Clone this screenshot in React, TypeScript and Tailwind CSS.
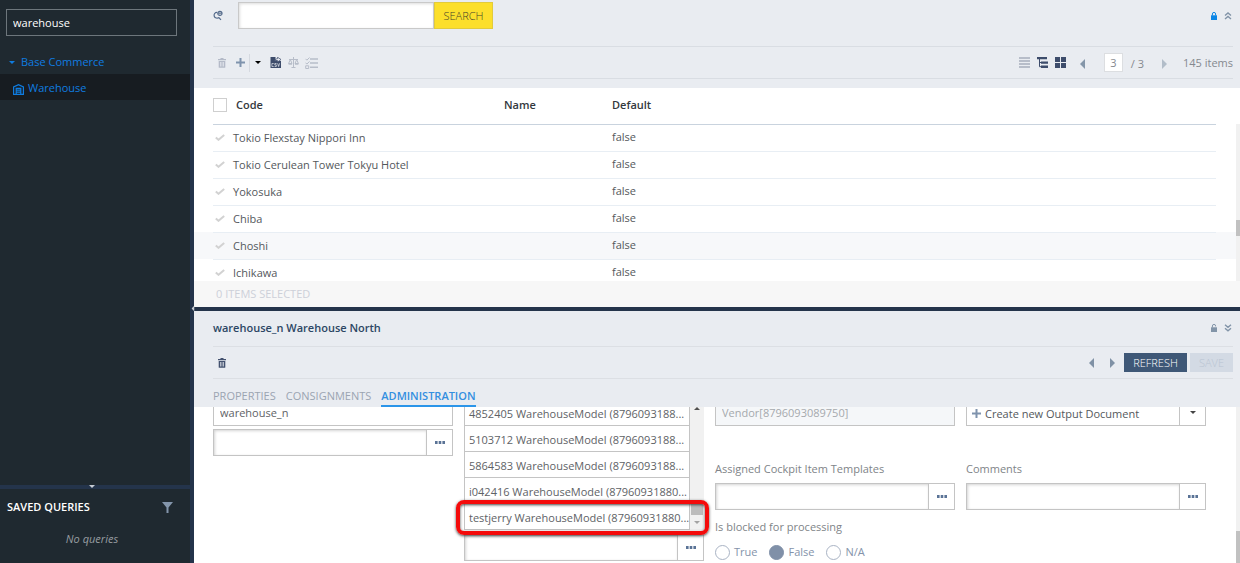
import type { ReactNode } from 'react'
import clsx from 'clsx'

const warehouses = [
  'Tokio Flexstay Nippori Inn',
  'Tokio Cerulean Tower Tokyu Hotel',
  'Yokosuka',
  'Chiba',
  'Choshi',
  'Ichikawa',
]

const models = [
  '4852405 WarehouseModel (8796093188...',
  '5103712 WarehouseModel (8796093188...',
  '5864583 WarehouseModel (8796093188...',
  'i042416 WarehouseModel (87960931880...',
  'testjerry WarehouseModel (87960931880...',
]

function TrashIcon({ className }: { className?: string }) {
  return (
    <svg className={clsx('h-2.5 w-2', className)} viewBox="0 0 8 10" fill="currentColor">
      <path d="M2.5 0h3v1H8v1.3H0V1h2.5z" />
      <path fillRule="evenodd" d="M.7 3h6.6v6.2q0 .6-.6.6H1.300q-.6 0-.6-.6zM2 4v4.500h.7V4zm1.650 0v4.500h.7V4zM5.300 4v4.500H6V4z" />
    </svg>
  )
}

function PlusIcon() {
  return (
    <svg className="h-[9px] w-[9px] text-[#7f93ad]" viewBox="0 0 9 9" fill="currentColor">
      <path d="M3.500 0h2v3.500H9v2H5.500V9h-2V5.500H0v-2h3.500z" />
    </svg>
  )
}

function CaretIcon({ className }: { className?: string }) {
  return (
    <svg className={clsx('h-[3px] w-[6px]', className)} viewBox="0 0 6 3" fill="currentColor">
      <path d="M0 0h6L3 3z" />
    </svg>
  )
}

function ArrowIcon({ flip, className }: { flip?: boolean; className?: string }) {
  return (
    <svg className={clsx('h-[10px] w-[6px]', className)} viewBox="0 0 6 10" fill="currentColor">
      {flip ? <path d="M1 0l5 5-5 5z" /> : <path d="M5 0v10L0 5z" />}
    </svg>
  )
}

function LockIcon({ open, className }: { open?: boolean; className?: string }) {
  return (
    <svg className={clsx('h-2 w-1.5', className)} viewBox="0 0 6 8" fill="currentColor">
      <path d="M0 3.300h6V8H0z" />
      <path
        d={open ? 'M1.400 3.500V2a1.600 1.600 0 0 1 3.200 0v.4' : 'M1.400 3.500V2a1.600 1.600 0 0 1 3.200 0v1.500'}
        fill="none"
        stroke="currentColor"
      />
    </svg>
  )
}

function ChevronsIcon({ down }: { down?: boolean }) {
  return (
    <svg className="h-2 w-2 text-[#8294a8]" viewBox="0 0 8 8" fill="none" stroke="currentColor" strokeWidth="1.400">
      <path d={down ? 'M1 .8l3 2.500L7 .8M1 4.300l3 2.500 3-2.500' : 'M1 3.500L4 1l3 2.500M1 7l3-2.500L7 7'} />
    </svg>
  )
}

function CheckIcon() {
  return (
    <svg className="h-[7px] w-[10px] text-[#d2d2d2]" viewBox="0 0 10 7" fill="none" stroke="currentColor" strokeWidth="2">
      <path d="M.8 3.500l2.700 2.300L9.200 1" />
    </svg>
  )
}

function IconButton({ label, className, children }: { label: string; className?: string; children: ReactNode }) {
  return (
    <button type="button" aria-label={label} className={clsx('flex items-center justify-center', className)}>
      {children}
    </button>
  )
}

function ReferenceField({ id, label }: { id: string; label: string }) {
  return (
    <div className="flex h-[27px] border border-[#c4c4c4] bg-white">
      <input id={id} aria-label={label} className="min-w-0 flex-1 px-1.5 shadow-[inset_1px_1px_3px_#d4d4d4] outline-none" />
      <IconButton label={`Browse ${label}`} className="w-[26px] border-l border-[#c4c4c4]">
        <svg className="h-[3px] w-[10px] text-[#5a7396]" viewBox="0 0 10 3" fill="currentColor">
          <path d="M0 0h2.600v3H0zM3.700 0h2.600v3H3.700zM7.400 0H10v3H7.400z" />
        </svg>
      </IconButton>
    </div>
  )
}

function Sidebar() {
  return (
    <aside className="flex w-[194px] shrink-0 flex-col border-r-4 border-[#24344b] bg-[#1f2930]">
      <div className="px-1.5 pt-[9px] pr-[13px]">
        <input
          aria-label="Filter tree"
          defaultValue="warehouse"
          className="h-[27px] w-full border border-[#6d767c] px-1.5 text-white outline-none"
        />
      </div>
      <nav className="mt-[14px] flex-1 text-[#0f7ce0]">
        <a href="#base-commerce" className="flex h-6 items-center gap-1.5 pl-[9px]">
          <CaretIcon />
          Base Commerce
        </a>
        <a href="#warehouse" className="flex h-[26px] items-center gap-1 bg-[#171c21] pt-px pl-[13px]">
          <svg className="mt-1 h-[11px] w-[11px]" viewBox="0 0 11 11" fill="none" stroke="currentColor" strokeWidth="1.200">
            <path d="M.6 10.400V3L5.500.7 10.400 3v7.400z" />
            <path d="M3.200 10V4.300h4.600V10M3.500 6.200h4M3.500 8.200h4" />
          </svg>
          Warehouse
        </a>
      </nav>
      <div className="flex h-1 justify-center bg-[#24344b] pr-1.5">
        <CaretIcon className="text-[#c7cdd6]" />
      </div>
      <section className="h-[74px]">
        <div className="flex h-9 items-center justify-between pr-[17px] pl-[7px]">
          <h2 className="font-semibold text-white">SAVED QUERIES</h2>
          <IconButton label="Filter saved queries">
            <svg className="h-[11px] w-[11px] text-[#8395ab]" viewBox="0 0 11 11" fill="currentColor">
              <path d="M0 0h11L6.500 5.500V11h-2V5.500z" />
            </svg>
          </IconButton>
        </div>
        <p className="pt-1.5 pr-1.5 text-center text-[#979da1] italic">No queries</p>
      </section>
    </aside>
  )
}

function ListToolbar() {
  return (
    <div className="mr-[7px] ml-[19px] flex h-[33px] items-center border-y border-[#d9dde3]">
      <IconButton label="Delete" className="ml-[5px]">
        <TrashIcon className="text-[#b4bac8]" />
      </IconButton>
      <IconButton label="Create" className="ml-2.5">
        <PlusIcon />
      </IconButton>
      <IconButton label="More create options" className="ml-1 h-[18px] w-4 border-l border-[#d5d9e0]">
        <CaretIcon className="text-black" />
      </IconButton>
      <IconButton label="Export CSV" className="ml-[5px]">
        <svg className="h-[11px] w-[11px]" viewBox="0 0 11 11">
          <path d="M.5 0h5v2h3v2H11v7H.500z" fill="#3d4c6b" />
          <path d="M4.500 3.500q1-2 3-1.800V.2L11 2.500 7.500 5V3.600q-1.500-.2-3-.1z" fill="#e9ecf1" stroke="#3d4c6b" strokeWidth=".7" />
          <path d="M3.700 6.500H1.900v3h1.800M6.500 6.500H4.800v1.400h1.500v1.600H4.600M7.600 6.300l1 3.200 1-3.200" fill="none" stroke="#e9ecf1" strokeWidth=".7" />
        </svg>
      </IconButton>
      <IconButton label="Compare" className="ml-[7px]">
        <svg className="h-[11px] w-[11px] text-[#b7bdc9]" viewBox="0 0 11 11" fill="none" stroke="currentColor">
          <path d="M5.500 0v10.500M3.500 10.500h4M1 2.500h9M2.300 2.500L.600 6.500h3.400zM8.700 2.500L7 6.500h3.400z" />
          <path d="M.6 7h3.400M7 7h3.400" strokeWidth="1.500" />
        </svg>
      </IconButton>
      <IconButton label="Bulk edit" className="ml-[6px]">
        <svg className="h-3 w-[13px] text-[#b7bdc9]" viewBox="0 0 13 12" fill="none" stroke="currentColor">
          <path d="M.5 1.800l1.400 1.400L4.500.5M.5 5.700l1.400 1.400 2.600-2.700M.7 8.800h3v2.700h-3z" />
          <path d="M5 2h8M5 6h8M5 10.200h8" strokeWidth="1.400" />
        </svg>
      </IconButton>
      <div className="ml-auto flex items-center text-[#85898f]">
        <IconButton label="List view">
          <svg className="h-[11px] w-[11px] text-[#b7bdc9]" viewBox="0 0 11 11" fill="currentColor">
            <path d="M0 0h11v2H0zM0 3h11v2H0zM0 6h11v2H0zM0 9h11v2H0z" />
          </svg>
        </IconButton>
        <IconButton label="Tree view" className="ml-[7px]">
          <svg className="h-[11px] w-[11px] text-[#3d4c6b]" viewBox="0 0 11 11" fill="currentColor">
            <path d="M0 0h10v2.300H0zM4 4.400h7v2.300H4zM4 8.600h7V11H4z" />
            <path d="M2.500 2v7.700H4M2.500 5.500H4" fill="none" stroke="currentColor" />
          </svg>
        </IconButton>
        <IconButton label="Grid view" className="ml-[7px]">
          <svg className="h-[11px] w-[11px] text-[#3d4c6b]" viewBox="0 0 11 11" fill="currentColor">
            <path d="M0 0h5v5H0zM6 0h5v5H6zM0 6h5v5H0zM6 6h5v5H6z" />
          </svg>
        </IconButton>
        <IconButton label="Previous page" className="ml-[14px] pt-0.5">
          <ArrowIcon className="text-[#8496a9]" />
        </IconButton>
        <input
          aria-label="Page"
          defaultValue="3"
          className="ml-[18px] h-[19px] w-[19px] border border-[#dcdee1] bg-white text-center outline-none"
        />
        <span className="pt-0.5 pl-2">/ 3</span>
        <IconButton label="Next page" className="ml-[17px] pt-0.5">
          <ArrowIcon flip className="text-[#b2bdc9]" />
        </IconButton>
        <span className="pl-4">145 items</span>
      </div>
    </div>
  )
}

function WarehouseTable() {
  return (
    <table className="w-full table-fixed text-left text-[#54585c]">
      <colgroup>
        <col className="w-[19px]" />
        <col className="w-[20px]" />
        <col className="w-[271px]" />
        <col className="w-[108px]" />
        <col />
        <col className="w-[20px]" />
      </colgroup>
      <thead>
        <tr className="h-9 text-[#33383d]">
          <td />
          <th className="border-b border-[#c9d3de] pb-0.5">
            <input
              type="checkbox"
              aria-label="Select all"
              className="block h-[14px] w-[14px] appearance-none border border-[#cfcfcf] bg-white"
            />
          </th>
          <th className="border-b border-[#c9d3de] pb-0.5 pl-[3px] font-semibold">Code</th>
          <th className="border-b border-[#c9d3de] pb-0.5 font-semibold">Name</th>
          <th className="border-b border-[#c9d3de] pb-0.5 font-semibold">Default</th>
          <td />
        </tr>
      </thead>
      <tbody>
        {warehouses.map((name) => (
          <tr key={name} className={clsx('h-[27px]', name === 'Choshi' && 'bg-[#f7f8fa]')}>
            <td />
            <td className="border-b border-[#e8eef4] pl-0.5">
              <CheckIcon />
            </td>
            <td className="border-b border-[#e8eef4]">{name}</td>
            <td className="border-b border-[#e8eef4]" />
            <td className="border-b border-[#e8eef4] pb-0.5">false</td>
            <td />
          </tr>
        ))}
      </tbody>
    </table>
  )
}

function ListPane() {
  return (
    <section className="flex h-[307px] shrink-0 flex-col">
      <header className="h-[88px] shrink-0 bg-[#e9ecf1]">
        <div className="flex h-[46px] items-start pt-0.5 pr-2 pl-[19px]">
          <IconButton label="Switch search mode" className="h-[27px] w-2.5">
            <svg className="h-[11px] w-[11px] text-[#52698a]" viewBox="0 0 11 11" fill="none" stroke="currentColor" strokeWidth="1.300">
              <path d="M4.500 2A3.200 3.200 0 1 0 6.500 7.600M6.200 7.500l2.600 2.800" />
              <circle cx="7.600" cy="3.200" r="2.300" />
              <path d="M7.600 1v4.400M5.400 3.200h4.400" strokeWidth=".7" />
            </svg>
          </IconButton>
          <div className="ml-[15px] flex h-[27px]">
            <input
              aria-label="Search warehouses"
              className="w-[196px] border border-[#c9c9c9] bg-white px-1.5 shadow-[inset_1px_1px_3px_#dddddd] outline-none"
            />
            <button type="button" className="w-[59px] border border-[#e2cb3c] bg-[#fcdf2b] font-light text-[#45442a]">
              SEARCH
            </button>
          </div>
          <div className="ml-auto flex h-[27px] items-center gap-[7px]">
            <IconButton label="Lock pane">
              <LockIcon className="text-[#0b86e6]" />
            </IconButton>
            <IconButton label="Collapse pane">
              <ChevronsIcon />
            </IconButton>
          </div>
        </div>
        <ListToolbar />
      </header>
      <div className="flex min-h-0 flex-1 overflow-hidden">
        <div className="min-w-0 flex-1">
          <WarehouseTable />
        </div>
        <div className="mt-9 w-1 bg-[#f1f1f1]">
          <div className="mt-24 h-4 bg-[#c1c1c1]" />
        </div>
      </div>
      <footer className="flex h-[26px] shrink-0 items-center bg-[#f7f7f7] pl-[22px] text-[#cdd0d9]">0 ITEMS SELECTED</footer>
    </section>
  )
}

function DetailPane() {
  return (
    <section className="flex min-h-0 flex-1 flex-col">
      <header className="shrink-0 bg-[#e9ecf1] pr-[7px] pl-[19px]">
        <div className="flex h-[35px] items-center justify-between pr-px pb-0.5">
          <h1 className="font-semibold text-[#2c4664]">warehouse_n Warehouse North</h1>
          <div className="flex items-center gap-[7px]">
            <IconButton label="Lock details">
              <LockIcon open className="text-[#8294a8]" />
            </IconButton>
            <IconButton label="Collapse details">
              <ChevronsIcon down />
            </IconButton>
          </div>
        </div>
        <div className="flex h-[33px] items-center border-y border-[#dcdfe4]">
          <IconButton label="Delete warehouse" className="ml-[5px]">
            <TrashIcon className="text-[#43516f]" />
          </IconButton>
          <div className="ml-auto flex items-center">
            <IconButton label="Previous item">
              <ArrowIcon className="text-[#8091a5]" />
            </IconButton>
            <IconButton label="Next item" className="ml-[14px]">
              <ArrowIcon flip className="text-[#8091a5]" />
            </IconButton>
            <button type="button" className="ml-[9px] h-[19px] w-[63px] bg-[#3f5877] font-light text-white">
              REFRESH
            </button>
            <button type="button" disabled className="ml-[3px] h-[19px] w-[43px] bg-[#d3dae4] font-light text-[#b9c4d2]">
              SAVE
            </button>
          </div>
        </div>
        <div role="tablist" className="flex h-[28px] items-end gap-2.5 text-[#9ba4b1]">
          <button type="button" role="tab" aria-selected="false" className="h-5 border-b-2 border-transparent">
            PROPERTIES
          </button>
          <button type="button" role="tab" aria-selected="false" className="h-5 border-b-2 border-transparent">
            CONSIGNMENTS
          </button>
          <button type="button" role="tab" aria-selected="true" className="h-5 border-b-2 border-[#2b95e9] font-semibold text-[#338fe0]">
            ADMINISTRATION
          </button>
        </div>
      </header>
      <div className="flex min-h-0 flex-1 overflow-hidden">
        <div className="-mt-2 grid flex-1 grid-cols-4 items-start gap-[11px] pr-[30px] pl-[19px] text-[#5e6266]">
          <div className="flex flex-col gap-[3px]">
            <input
              aria-label="Code"
              defaultValue="warehouse_n"
              className="h-[27px] w-full border border-[#c4c4c4] px-1.5 outline-none"
            />
            <ReferenceField id="owner" label="Owner" />
          </div>

          <div className="flex flex-col gap-1">
            <div className="flex">
              <ul className="min-w-0 flex-1 border-x border-[#c4c4c4] pt-px">
                {models.map((model, i) => (
                  <li key={model} className="relative flex h-[26px] items-center border-b border-[#c4c4c4] pt-0.5 pl-1 leading-3 whitespace-nowrap">
                    {model}
                    {i === models.length - 1 && (
                      <span className="absolute -top-1 -right-5 -bottom-1.5 -left-[9px] rounded-lg border-4 border-[#f40b0b] shadow-[0_1px_3px_#444,inset_0_1px_3px_#444]" />
                    )}
                  </li>
                ))}
              </ul>
              <div className="flex w-[14px] flex-col items-center justify-between bg-[#f1f1f1] pt-2 pb-1.5">
                <CaretIcon className="rotate-180 text-[#505050]" />
                <div className="flex flex-col items-center gap-1.5">
                  <div className="h-3 w-3 bg-[#bcbcbc]" />
                  <CaretIcon className="text-[#a3a3a3]" />
                </div>
              </div>
            </div>
            <ReferenceField id="stock-levels" label="Stock levels" />
          </div>

          <div className="text-[#808488]">
            <input
              aria-label="Vendor"
              disabled
              defaultValue="Vendor[8796093089750]"
              className="h-[27px] w-full border border-[#c4c4c4] bg-[#f5f7f9] px-1.5 text-[#a5a9ad]"
            />
            <label htmlFor="templates" className="mt-[34px] mb-[5px] block h-[18px] leading-[18px]">
              Assigned Cockpit Item Templates
            </label>
            <ReferenceField id="templates" label="Assigned Cockpit Item Templates" />
            <fieldset>
              <legend className="pt-2 leading-[18px]">Is blocked for processing</legend>
              <div className="mt-2 flex items-center gap-3 text-[#8493aa]">
                {['True', 'False', 'N/A'].map((option) => (
                  <label key={option} className="flex items-center gap-1">
                    <input
                      type="radio"
                      name="blocked"
                      defaultChecked={option === 'False'}
                      className="h-[15px] w-[15px] appearance-none rounded-full border border-[#a9b3c4] checked:border-[#8090a8] checked:bg-[#8090a8]"
                    />
                    {option}
                  </label>
                ))}
              </div>
            </fieldset>
          </div>

          <div className="text-[#808488]">
            <div className="flex h-[27px] border border-[#c4c4c4] text-[#54585c]">
              <button type="button" className="flex flex-1 items-center gap-1 pt-0.5 pl-[5px] leading-3">
                <PlusIcon />
                Create new Output Document
              </button>
              <IconButton label="More output document options" className="w-[26px] border-l border-[#c4c4c4]">
                <CaretIcon className="text-[#444]" />
              </IconButton>
            </div>
            <label htmlFor="comments" className="mt-[34px] mb-[5px] block h-[18px] leading-[18px]">
              Comments
            </label>
            <ReferenceField id="comments" label="Comments" />
          </div>
        </div>
        <div className="flex w-1 flex-col justify-end bg-[#f1f1f1]">
          <div className="h-8 bg-[#c1c1c1]" />
        </div>
      </div>
    </section>
  )
}

export default function App() {
  return (
    <div className="flex h-screen overflow-hidden bg-white font-['Open_Sans','Noto_Sans',sans-serif] text-[11px] leading-4">
      <Sidebar />
      <main className="flex min-w-0 flex-1 flex-col">
        <ListPane />
        <div className="relative h-1 shrink-0 bg-[#24344b]">
          <CaretIcon className="absolute top-0 -left-1 rotate-90 text-[#c7cdd6]" />
        </div>
        <DetailPane />
      </main>
    </div>
  )
}
